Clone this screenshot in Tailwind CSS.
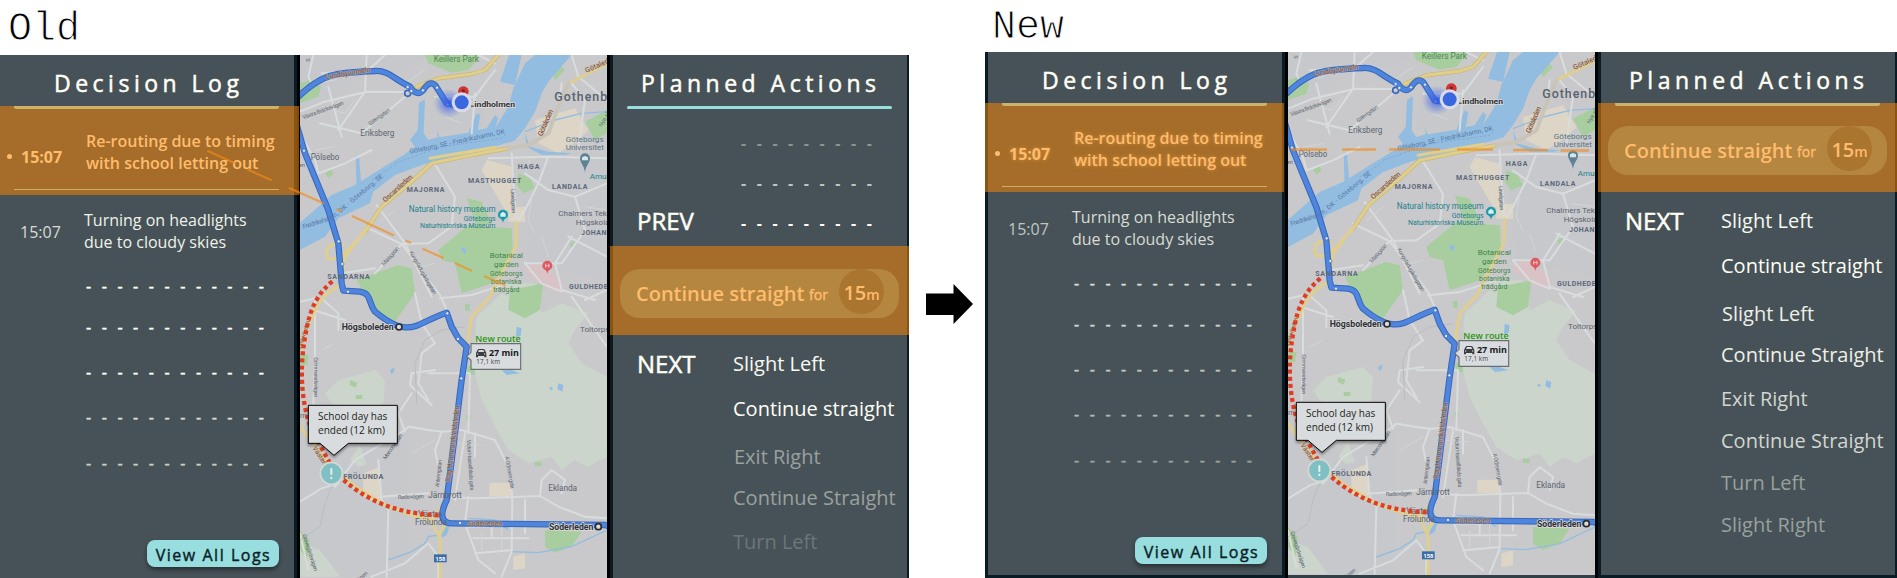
<!DOCTYPE html>
<html lang="en">
<head>
<meta charset="utf-8">
<title>Decision Log – Old and New</title>
<script src="https://cdn.jsdelivr.net/npm/@tailwindcss/browser@4"></script>
</head>
<body class="bg-white font-['Open_Sans',sans-serif]">
<svg class="absolute size-0" aria-hidden="true">
<defs>
<radialGradient id="glow"><stop offset="0" stop-color="#2f55e6" stop-opacity=".85"/><stop offset="1" stop-color="#4a70ee" stop-opacity="0"/></radialGradient>
<filter id="drop" x="-20%" y="-20%" width="140%" height="150%"><feDropShadow dx="0" dy="6" stdDeviation="5" flood-opacity=".4"/></filter>
</defs>
<symbol id="map" viewBox="15 15 921 1569" preserveAspectRatio="none">
<rect x="15" y="15" width="921" height="1569" fill="#c9c9cb"/>
<!-- urban blocks -->
<g fill="#c3c5ca">
<path d="M15 15H400L330 60 200 80 60 190 15 200zM420 100L600 60 560 230 400 250zM660 340L936 310V690L700 640 690 500zM15 1140H340V1580H15z" opacity=".35"/>
</g>
<g fill="#ddd6c6">
<path d="M720 210L840 175 880 240 850 270 790 310 730 280zM575 330L650 350 650 480 630 480 560 360zM640 470h50v45h-50zM205 1270l50-20v110l-50-20zM583 1298h66v40h-66zM655 1520l35-10v45l-35 5z"/>
</g>
<path d="M690 650L740 640 800 690 805 730 740 710 695 670z" fill="#d9c3c6"/>
<!-- open land -->
<g fill="#cbd5cc">
<path d="M740 790L800 760 880 790 840 840 820 880 860 940 936 980V1220L905 1235 880 1250 840 1230 800 1260 770 1220 700 1240 640 1200 600 1130 560 1050 535 950 545 800 620 730z"/>
<path d="M90 1030L130 990 240 960 270 990 265 1060 180 1090 110 1060zM165 1230l30-45 20 60-25 5zM15 1480l60 20 60 80H15zM630 700L720 700 740 790 650 800z"/>
</g>
<!-- parks -->
<g fill="#a8ce9f">
<path d="M390 15H560L520 60 470 68 400 40zM15 100L50 88 78 110 70 140 15 160zM430 600L520 525 650 535 655 620 590 700 500 730 480 640 440 630zM185 690L310 645 350 655 360 730 310 800 290 830 230 770zM645 720L745 700 735 780 690 805 640 780zM515 445L560 455 590 520 545 530zM670 370l35 15 15 30-35 15-20-25zM870 215L936 180V250L900 270zM750 1440L860 1445 830 1490 780 1508 750 1490zM90 370l20-12 5 15-15 10zM190 400l10 3-3 12-8-4zM165 990l22 8-5 15-18-8zM182 1035h20v12h-20zM515 950l25-10v35l-20 0zM15 910l25 5-3 30-22 0zM15 1440l30 30-8 60-22-30zM510 762h14v20h-14zM720 1236h20v12h-20zM515 1096l10-5 3 18-12 3zM770 70l30-20 10 10-30 30zM825 580l15-8-2 15-12 5z"/>
</g>
<!-- water -->
<g fill="#92bde0">
<path d="M15 518L110 435 180 405 260 355 330 312 360 290 345 270 368 240 372 158 390 148 386 250 400 270 428 262 425 240 434 262 520 248 545 190 556 196 548 240 575 235 600 195 610 205 600 235 640 170 655 115 690 40 720 15H830L760 95 740 130 720 185 690 235 660 272 560 300 440 328 380 345 300 375 235 425 225 460 130 505 90 560 15 600z"/>
<path d="M642 15H680L660 105 615 95zM182 318h10L200 420 185 430zM690 250L705 290 760 305 830 310 812 314 740 314 695 290z"/>
<path d="M665 830l15 5-3 22-14 6zM620 960l30 0 25 10-40 5zM790 1000l15 5-3 20-15-8zM765 1010l8 3-2 8-8-4zM285 960l14-8-2 15-8 5zM500 590l14 8-2 15-12-8zM440 1435l25-10-10 30-15 8z"/>
</g>
<g fill="none" stroke="#92bde0" stroke-width="4">
<path d="M690 245L780 210 860 190 936 185M280 1530L350 1505 390 1480 400 1460 430 1455M650 1505L730 1508 830 1490 936 1440M520 1405L600 1410 640 1440"/>
</g>
<!-- minor roads -->
<g fill="none" stroke="#d9dcdc" stroke-width="6" stroke-linecap="round">
<path d="M55 15L40 80 50 100M15 185L90 155 215 125 335 126M215 15L210 125 130 240M75 220L200 250 330 140M100 110L140 260M270 15L220 60 80 70M15 250L60 330 70 370 150 340 230 300M550 15L600 40M420 140L540 140 600 60M540 130L530 250M650 310L655 400 665 520M580 325L760 320 936 325M760 320L730 400 690 480 665 520M690 370L760 420 840 440 936 400M830 100L870 150 850 290M830 15L850 80 936 150M800 100L790 180M840 440L870 540 800 640 735 640 690 640"/>
<path d="M415 335L480 440 470 530 400 580 320 582M245 465L330 580M210 530L320 582 435 735M435 735L460 790 455 785M240 670L320 582M435 745L530 735 640 700M140 670L240 655M830 560L780 640 800 720 900 750M820 560L936 620M690 640L740 700 800 725M936 720L870 750M830 740L900 840 936 890"/>
<path d="M15 755L60 745 60 930 55 1060M85 750L130 790 130 840M55 780L150 810M360 730L380 820 420 880 380 910 370 1000 400 1050M420 960L350 970 345 1005 410 1065M400 970L525 970 520 1150M330 580L410 740M15 1355L80 1315 130 1300M120 1310L180 1230 330 1140 340 1130 400 1140 440 1145 500 1140 600 1170 640 1250 652 1340 650 1500 540 1510"/>
<path d="M455 1340L540 1345 735 1338 790 1370 870 1400 936 1405M520 1340L510 1420 550 1530 600 1570M250 1230L260 1350 280 1380 275 1580M330 1145L310 1090 350 1030M440 1145L420 1200 430 1250M470 1160L490 1060M510 1150L480 1350M540 1150L540 1220M535 1465L700 1465M690 1350V1450M735 1338L740 1290 770 1260 810 1290 800 1330M650 1505L620 1580M255 1340L400 1330M15 1450L40 1560M230 1580L330 1540 400 1480 430 1520 430 1584M520 1430L690 1425M590 1420V1465"/>
</g>
<g fill="none" stroke="#d2d5d6" stroke-width="3">
<path d="M60 100L120 90 160 60M110 180L150 190 180 150M60 300L120 290M390 60L330 100M450 200L500 220M710 440L700 510 720 550M870 470L936 480M700 330L720 360M740 560L760 620M250 520L300 480M380 650L420 640M80 900L120 880M490 1180L560 1185M420 1170L350 1210M560 1450V1500M620 1420V1500"/>
<path d="M510 830L440 840 390 870 360 940 365 1060" stroke="#b9bcc0"/><path d="M15 1470L75 1430 90 1360 110 1310" stroke="#b9bcc0"/>
</g>
<!-- major roads -->
<g fill="none" stroke-linecap="round" stroke-linejoin="round">
<g stroke="#c9b673" stroke-width="13"><path d="M210 545L260 470 350 395 410 340 530 315 640 295M365 110L430 85 530 72 570 60 610 15"/></g>
<g stroke="#e0cf8c" stroke-width="9">
<path d="M365 110L430 85 530 72 570 60 610 15M936 42L870 75 820 100M210 545L260 470 350 395 410 340 530 315 640 295M405 325L600 292M665 515L662 590 625 660 585 740 530 800 518 870 510 930M210 540L150 620 140 700 90 735 65 770 30 850 15 900M145 585Q95 575 95 610T150 610L210 545M15 1130L100 1240 180 1310 280 1370 350 1395 410 1410 436 1470 436 1584M440 1370L410 1410M460 1410L436 1450"/>
</g>
<path d="M640 295L700 285 760 250 790 170 820 100" stroke="#c9c4b8" stroke-width="12"/>
</g>
<path d="M230 390L300 345 M300 340L440 290 620 265 635 250" stroke="#7d9dcb" stroke-width="2" stroke-dasharray="8 5" fill="none"/>
<!-- route -->
<g fill="none" stroke-linecap="round" stroke-linejoin="round">
<g stroke="#3567bd" stroke-width="19">
<path d="M5 145Q70 80 130 72T240 63C280 60 300 90 345 110C360 135 375 132 385 120C400 95 415 95 425 112L455 160 480 165"/>
<path d="M5 225L30 310 100 480 130 580 140 700 145 722 195 725C230 730 220 760 240 785C270 810 300 830 330 832C370 835 390 810 455 788L470 830 490 865 515 890 500 990 455 1350C440 1380 430 1420 470 1420L930 1425 940 1428"/>
</g>
<g stroke="#4f85dc" stroke-width="13">
<path d="M5 145Q70 80 130 72T240 63C280 60 300 90 345 110C360 135 375 132 385 120C400 95 415 95 425 112L455 160 480 165"/>
<path d="M5 225L30 310 100 480 130 580 140 700 145 722 195 725C230 730 220 760 240 785C270 810 300 830 330 832C370 835 390 810 455 788L470 830 490 865 515 890 500 990 455 1350C440 1380 430 1420 470 1420L930 1425 940 1428"/>
</g>
<circle cx="338" cy="130" r="9" stroke="#3567bd" stroke-width="5"/>
</g>
<g fill="#dfe5ee" stroke="#3567bd" stroke-width="2"><circle cx="338" cy="111" r="5"/><circle cx="349" cy="123" r="5"/><circle cx="384" cy="121" r="5"/><circle cx="426" cy="113" r="5"/><circle cx="458" cy="163" r="5"/><circle cx="27" cy="302" r="5"/><circle cx="131" cy="574" r="5"/><circle cx="142" cy="642" r="5"/><circle cx="159" cy="725" r="5"/><circle cx="457" cy="790" r="5"/><circle cx="489" cy="867" r="5"/><circle cx="499" cy="985" r="5"/><circle cx="495" cy="1419" r="5"/></g>
<!-- labels -->
<g font-family="Roboto,sans-serif" font-size="24" fill="#5b6470">
<text x="416" y="35" font-size="25" textLength="136" lengthAdjust="spacingAndGlyphs" fill="#4e8454">Keillers Park</text>
<text x="196" y="259" font-size="25" textLength="102" lengthAdjust="spacingAndGlyphs">Eriksberg</text>
<text x="47" y="329" font-size="25" textLength="86" lengthAdjust="spacingAndGlyphs">Pölsebo</text>
<text x="778" y="153" font-size="37" font-weight="500" letter-spacing="3" fill="#56616f">Gothenburg</text>
<text x="812" y="275" textLength="114" lengthAdjust="spacingAndGlyphs" fill="#5a7484">Göteborgs</text>
<text x="812" y="301" textLength="115" lengthAdjust="spacingAndGlyphs" fill="#5a7484">Universitet</text>
<g font-weight="700" fill="#5c6779" font-size="21">
<text x="668" y="358" textLength="65">HAGA</text><text x="519" y="398" textLength="160">MASTHUGGET</text><text x="771" y="418" textLength="106">LANDALA</text><text x="335" y="426" textLength="113">MAJORNA</text><text x="97" y="688" textLength="127">SANDARNA</text><text x="858" y="555" letter-spacing="1.5">JOHANNEBERG</text><text x="822" y="716" letter-spacing="1.5">GULDHEDEN</text><text x="145" y="1286" font-size="22" textLength="120">FRÖLUNDA</text>
</g>
<g fill="#22808c"><text x="341" y="486" font-size="25" textLength="261" lengthAdjust="spacingAndGlyphs">Natural history museum</text><text x="506" y="512" font-size="21" textLength="96">Göteborgs</text><text x="375" y="535" font-size="21" textLength="226">Naturhistoriska Museum</text><text x="884" y="388">Amundön</text></g>
<text x="790" y="497">Chalmers Tekniska</text><text x="842" y="524">Högskola</text>
<g fill="#3f8448" text-anchor="middle"><text x="634" y="625" textLength="100">Botanical</text><text x="634" y="652">garden</text><text x="634" y="678" font-size="21">Göteborgs</text><text x="634" y="702" font-size="21">botaniska</text><text x="634" y="725" font-size="21">trädgård</text></g>
<text x="855" y="845">Toltorpsdalen</text><text x="-12" y="724">en</text>
<text x="760" y="1324" font-size="25" textLength="86">Eklanda</text><text x="400" y="1344" font-size="25" textLength="100">Järnbrott</text><text x="370" y="1401" font-size="25">Västra</text><text x="360" y="1426" font-size="25" textLength="96">Frölunda</text>
<g fill="#5877a8" font-size="20">
<text transform="translate(345 311) rotate(-12)" textLength="292">Göteborg, SE - Fredrikshamn, DK</text>
<text transform="translate(25 537) rotate(-18)" textLength="98">Fredriksham</text><text transform="translate(120 503) rotate(-40)" textLength="190">n, DK - Göteborg, SE</text>
</g>
<g fill="#8b5a3e" font-weight="500" font-size="22" stroke="#d3cfc8" stroke-width="2.5" stroke-opacity=".6" paint-order="stroke">
<text transform="translate(94 87) rotate(-9)" textLength="135">Lundbytunneln</text><text transform="translate(271 458) rotate(-42)" textLength="112">Oscarsleden</text><text transform="translate(741 260) rotate(-66)" textLength="85">Götaleden</text><text transform="translate(874 69) rotate(-24)">Götaleden</text><text transform="translate(466 1297) rotate(-83)" textLength="232">Dag Hammarskjöldsleden</text><text x="517" y="1427" textLength="105">Söderleden</text><text transform="translate(52 1195) rotate(56)" font-size="20">Västerleden</text>
<text transform="translate(17 900) rotate(-72)" font-size="17">Västerleden</text>
</g>
<g font-size="17" fill="#616872">
<text transform="translate(25 208) rotate(-20)" textLength="130">Västra Bräckevägen</text><text transform="translate(226 227) rotate(-36)" textLength="75">Säterigatan</text><text transform="translate(342 607) rotate(60)" textLength="147">Kungsladugårdsgatan</text><text transform="translate(267 648) rotate(-48)" textLength="70">Mariagatan</text><text transform="translate(647 418) rotate(87)" textLength="72">Linnégatan</text><text transform="translate(56 922) rotate(90)" textLength="120">Grimmeredsvägen</text><text transform="translate(272 1230) rotate(-55)" textLength="90">Marconigatan</text><text transform="translate(432 1312) rotate(-84)" textLength="82">Antenngatan</text><text transform="translate(515 1170) rotate(86)" textLength="152">Victor Hasselblads gata</text><text transform="translate(630 1220) rotate(80)" textLength="98">A Odhners gata</text><text transform="translate(309 1347) rotate(-2)" textLength="78">Radiovägen</text><text transform="translate(22 1455) rotate(72)" textLength="115">Grevegårdsvägen</text><text transform="translate(185 1600) rotate(-40)">vägen</text><text transform="translate(920 232) rotate(-60)">Nya allén</text><text x="2" y="351">gen</text><text transform="translate(46 35) rotate(-90)">S</text><text x="15" y="1104" font-size="24">m</text>
</g>
</g>
<!-- points of interest -->
<path d="M870 397C867 375 855 368 855 355a15 15 0 0 1 30 0C885 368 873 375 870 397z" fill="#5d8295" transform="translate(0 -30)"/><path d="M861 322l9-4 9 4v9h-18z" fill="#d9e4e6"/>
<path d="M624 519C621 500 609 508 609 494a15 15 0 0 1 30 0C639 508 627 500 624 519z" fill="#1d99aa"/><path d="M616 491l8-6 8 6v9h-16z" fill="#d9f0f0"/>
<path d="M757 671C754 655 742 660 742 647a15 15 0 0 1 30 0C772 660 760 655 757 671z" fill="#db5a62"/><path d="M752 641v12M762 641v12M752 647h10" stroke="#f6dada" stroke-width="2.5"/>
<rect x="417" y="1513" width="38" height="24" fill="#3d6da8"/><text x="436" y="1532" text-anchor="middle" font-family="Roboto" font-weight="700" font-size="17" fill="#fff">158</text>
<!-- blocked route -->
<g fill="none" stroke="#e03c22" stroke-width="13" stroke-dasharray="12 9.3">
<path d="M112 694C50 745 38 810 27 880C15 960 18 1060 50 1140L105 1240"/>
<path d="M146 1290C210 1345 290 1390 432 1396"/>
</g>
<g font-family="Roboto,sans-serif" font-weight="700" font-size="25" fill="#2d3036" stroke="#dcdcdc" stroke-width="4" paint-order="stroke">
<text x="140" y="839" font-size="26" textLength="156" lengthAdjust="spacingAndGlyphs">Högsboleden</text>
<text x="762" y="1439" font-size="26" textLength="133" lengthAdjust="spacingAndGlyphs">Söderleden</text>
<text x="538" y="170" font-size="24" textLength="122" lengthAdjust="spacingAndGlyphs">indholmen</text><rect x="528" y="167" width="8" height="3" stroke="none"/>
</g>
<g fill="#dcdcdc" stroke="#2c2c2e" stroke-width="5"><circle cx="312" cy="831" r="9"/><circle cx="910" cy="1430" r="9"/></g>
<!-- vehicle -->
<path d="M490 130a16 16 0 1 1 30 0l-15 20z" fill="#d13434"/><circle cx="505" cy="123" r="5" fill="#8a1a22"/>
<ellipse cx="462" cy="160" rx="46" ry="44" fill="url(#glow)"/>
<circle cx="500" cy="157" r="30" fill="#d9dce6"/><circle cx="500" cy="157" r="21" fill="#3a66e0"/>
<!-- callouts -->
<text x="541" y="875" font-family="Open Sans,sans-serif" font-weight="600" font-size="25" fill="#2c9313" textLength="136" lengthAdjust="spacingAndGlyphs">New route</text>
<path d="M528 881H677V958H528V931L515 919 528 907z" fill="#d8dcde" stroke="#6b6f72" stroke-width="3.5"/>
<path d="M543 909L548 899Q549 897 552 897H565Q568 897 569 899L574 909V922H568V918H549V922H543z" fill="#3b3d40"/><path d="M549 906L552 900H565L568 906z" fill="#d8dcde"/><circle cx="548" cy="912" r="2" fill="#d8dcde"/><circle cx="569" cy="912" r="2" fill="#d8dcde"/>
<text x="582" y="918" font-family="Open Sans,sans-serif" font-weight="700" font-size="26" fill="#17191b" textLength="90" lengthAdjust="spacingAndGlyphs">27 min</text>
<text x="544" y="941" font-family="Open Sans,sans-serif" font-size="19" fill="#404346" textLength="71">17,1 km</text>
<g filter="url(#drop)"><path d="M40 1066H307V1180H160L117 1216 75 1180H40z" fill="#d8dcde" stroke="#050505" stroke-width="3"/></g>
<g font-family="Open Sans,sans-serif" font-size="30" fill="#1c1e20"><text x="69" y="1109" textLength="208" lengthAdjust="spacingAndGlyphs">School day has</text><text x="69" y="1151" textLength="201" lengthAdjust="spacingAndGlyphs">ended (12 km)</text></g>
<circle cx="109" cy="1270" r="33" fill="#80c0c4" stroke="#d3d9d2" stroke-width="5"/><rect x="106" y="1254" width="6" height="21" rx="3" fill="#e4efec"/><circle cx="109" cy="1284" r="3.5" fill="#e4efec"/>
</symbol>
</svg>

<main class="flex h-[578px] w-[1897px] overflow-hidden">
<!-- Old -->
<section class="flex w-[909px] shrink-0 flex-col">
<h1 class="h-[55px] shrink-0 pl-[8px] pt-[7px] font-['Liberation_Mono',monospace] text-[40px] leading-[46px] text-black [-webkit-text-stroke:1px_white]">Old</h1>
<div class="relative flex h-[523px] bg-black text-[#fffff5]">
<div class="mr-[3px] flex w-[297px] shrink-0 flex-col border-r-[3px] border-[#091c26] bg-[#465258]">
<h2 class="h-[51px] shrink-0 whitespace-nowrap pl-[54px] pt-[12px] text-[23px] leading-8 tracking-[4.5px] [-webkit-text-stroke:0.5px]">Decision Log</h2>
<div class="relative z-10 flex h-[89px] w-[299px] shrink-0 flex-col bg-[#f08206]/56 text-base font-semibold text-[#ffbc6d]">
<div class="ml-[14px] h-[3px] w-[265px] rounded-b-xs bg-[#cdb269]"></div>
<div class="flex h-[80px] pt-[21px]"><span class="ml-[7px] mr-[9px] mt-[24px] size-[5px] rounded-full bg-[#ffbc6d]"></span><span class="w-[65px] pt-[16px] font-bold leading-[22px]">15:07</span><p class="whitespace-nowrap leading-[22px]">Re-routing due to timing<br>with school letting out</p></div>
<div class="ml-[14px] h-px w-[265px] bg-[#cdb060]"></div>
</div>
<div class="mt-[14px] flex h-[65px] shrink-0 leading-[22px]"><span class="ml-[20px] w-[64px] pt-[12px] text-[#d8dcd4]">15:07</span><p class="whitespace-nowrap text-[#f0f2e8]">Turning on headlights<br>due to cloudy skies</p></div>
<div class="flex flex-col whitespace-nowrap pl-[86px] leading-6 tracking-[0.2em] [-webkit-text-stroke:0.4px]"><p class="h-[41px]">- - - - - - - - - - - -</p><p class="h-[45px]">- - - - - - - - - - - -</p><p class="h-[45px]">- - - - - - - - - - - -</p><p class="h-[46px] text-[#dadcd4]">- - - - - - - - - - - -</p><p class="text-[#c8ccc5]">- - - - - - - - - - - -</p></div>
<div class="mb-[11px] ml-[147px] mt-auto flex h-[27px] w-[132px] items-center justify-center whitespace-nowrap rounded-lg bg-[#99dedf] pl-px pt-[2px] text-base tracking-[0.095em] text-[#0a1c26] shadow-[0_3px_4px_rgba(0,0,0,.4)] [-webkit-text-stroke:0.4px]">View All Logs</div>
</div>
<svg class="h-[523px] w-[307px] shrink-0"><use href="#map" width="307" height="523"/></svg>
<div class="ml-[3px] flex w-[299px] shrink-0 flex-col border-l-[3px] border-r-2 border-[#091c26] bg-[#465258]">
<h2 class="h-[51px] shrink-0 whitespace-nowrap pl-[28px] pt-[12px] text-[23px] leading-8 tracking-[4.5px] [-webkit-text-stroke:0.5px]">Planned Actions</h2>
<div class="ml-[14px] h-[3px] w-[265px] shrink-0 rounded-full bg-[#99dedf]"></div>
<div class="flex h-[137px] shrink-0 pt-[22px]"><span class="w-[102px] pl-[24px] pt-[78px] text-[24px] leading-6 [-webkit-text-stroke:0.5px]">PREV</span><div class="ml-[26px] whitespace-nowrap font-bold leading-6 tracking-[0.2em]"><p class="h-10 text-[#8b9492]">- - - - - - - - -</p><p class="h-10 text-[#c0c4bf]">- - - - - - - - -</p><p>- - - - - - - - -</p></div></div>
<div class="-ml-[3px] flex h-[89px] w-[299px] shrink-0 bg-[#f08206]/56 pl-[10px] pt-[23px]">
<div class="flex h-[49px] w-[279px] items-center whitespace-nowrap rounded-[20px] bg-[#b58640] pl-[16px] text-[#ffbc6d]"><span class="w-[173px] text-[20px] font-semibold">Continue straight</span><span class="w-[30px] pt-[3px] text-sm [-webkit-text-stroke:0.4px]">for</span><span class="-mt-1 flex size-[45px] items-baseline justify-center rounded-full bg-[#aa752f] text-[20px] font-semibold leading-[47px]">15<span class="text-sm">m</span></span></div>
</div>
<div class="flex pt-[17px]"><span class="w-[120px] pl-[24px] text-[24px] leading-6 [-webkit-text-stroke:0.5px]">NEXT</span><div class="whitespace-nowrap text-[20px] leading-6"><p class="h-[45px] text-[#f8f9f0]">Slight Left</p><p class="h-[48px]">Continue straight</p><p class="h-[41px] pl-px text-[#9aa19f]">Exit Right</p><p class="h-[44px] text-[#9aa19f]">Continue Straight</p><p class="text-[#6c7678]">Turn Left</p></div></div>
</div>
<svg class="absolute left-0 top-0 z-20" width="600" height="523" viewBox="0 55 600 523"><path d="M207.3 150.7L235.5 163.5M247.5 169.5L271.5 180.2M288.7 187.7L324 203.5M336.5 209L341.5 212M352 216L394 235.5M405.5 240.5L411 243M422.5 248.7L443.5 258M455 263L472 271M484 276L505.5 285.5" stroke="#f58a18" stroke-opacity=".65" stroke-width="2.2"/></svg>
</div>
</section>

<!-- transition arrow -->
<div class="flex w-[76px] shrink-0 pl-[17px] pt-[284px]"><svg width="47" height="40" viewBox="0 0 47 40"><path d="M0 9.5H27.5V0L47 20 27.5 40V31H0z"/></svg></div>

<!-- New -->
<section class="flex w-[912px] shrink-0 flex-col">
<h1 class="h-[52px] shrink-0 pl-[7px] pt-[5px] font-['Liberation_Mono',monospace] text-[40px] leading-[46px] text-black [-webkit-text-stroke:1px_white]">New</h1>
<div class="relative flex h-[526px] bg-black text-[#fffff5]">
<div class="mr-[3px] flex w-[300px] shrink-0 flex-col border-x-[3px] border-b-[3px] border-[#091c26] bg-[#465258]">
<h2 class="h-[51px] shrink-0 whitespace-nowrap pl-[54px] pt-[12px] text-[23px] leading-8 tracking-[4.5px] [-webkit-text-stroke:0.5px]">Decision Log</h2>
<div class="relative z-10 -ml-[3px] flex h-[89px] w-[299px] shrink-0 flex-col bg-[#f08206]/56 pl-[3px] text-base font-semibold text-[#ffbc6d] [text-shadow:0_0_4px_#ffae5099]">
<div class="ml-[14px] h-[3px] w-[265px] rounded-b-xs bg-[#cdb269]"></div>
<div class="flex h-[80px] pt-[21px]"><span class="ml-[7px] mr-[9px] mt-[24px] size-[5px] rounded-full bg-[#ffbc6d]"></span><span class="w-[65px] pt-[16px] font-bold leading-[22px]">15:07</span><p class="whitespace-nowrap leading-[22px]">Re-routing due to timing<br>with school letting out</p></div>
<div class="ml-[14px] h-px w-[265px] bg-[#cdb060]"></div>
</div>
<div class="mt-[14px] flex h-[65px] shrink-0 leading-[22px]"><span class="ml-[20px] w-[64px] pt-[12px] text-[#c0c6c0]">15:07</span><p class="whitespace-nowrap text-[#d8dcd4]">Turning on headlights<br>due to cloudy skies</p></div>
<div class="flex flex-col whitespace-nowrap pl-[86px] leading-6 tracking-[0.2em] [-webkit-text-stroke:0.4px]"><p class="h-[41px] text-[#d8dcd4]">- - - - - - - - - - - -</p><p class="h-[45px] text-[#d0d4cc]">- - - - - - - - - - - -</p><p class="h-[45px] text-[#c0c5be]">- - - - - - - - - - - -</p><p class="h-[46px] text-[#b0b6b1]">- - - - - - - - - - - -</p><p class="text-[#9aa19f]">- - - - - - - - - - - -</p></div>
<div class="mb-[11px] ml-[147px] mt-auto flex h-[27px] w-[132px] items-center justify-center whitespace-nowrap rounded-lg bg-[#99dedf] pl-px pt-[2px] text-base tracking-[0.095em] text-[#0a1c26] shadow-[0_3px_4px_rgba(0,0,0,.4)] [-webkit-text-stroke:0.4px]">View All Logs</div>
</div>
<div class="w-[307px] shrink-0 bg-[#333f46]"><svg class="block h-[523px] w-[307px]"><use href="#map" width="307" height="523"/></svg></div>
<div class="ml-[3px] flex w-[299px] shrink-0 flex-col border-b-[3px] border-l-[3px] border-r-2 border-[#091c26] bg-[#465258]">
<h2 class="h-[51px] shrink-0 whitespace-nowrap pl-[28px] pt-[12px] text-[23px] leading-8 tracking-[4.5px] [-webkit-text-stroke:0.5px]">Planned Actions</h2>
<div class="-ml-[3px] flex h-[89px] w-[299px] shrink-0 flex-col bg-[#f08206]/56 pl-[10px]">
<div class="mb-[20px] ml-[7px] h-[3px] w-[265px] rounded-b-xs bg-[#cdb269]"></div>
<div class="flex h-[49px] w-[279px] items-center whitespace-nowrap rounded-[20px] bg-[#b58640] pl-[16px] text-[#ffbc6d]"><span class="w-[173px] text-[20px] font-semibold">Continue straight</span><span class="w-[30px] pt-[3px] text-sm [-webkit-text-stroke:0.4px]">for</span><span class="-mt-1 flex size-[45px] items-baseline justify-center rounded-full bg-[#aa752f] text-[20px] font-semibold leading-[47px]">15<span class="text-sm">m</span></span></div>
</div>
<div class="flex pt-[17px]"><span class="w-[120px] pl-[24px] text-[24px] leading-6 [-webkit-text-stroke:0.5px]">NEXT</span><div class="whitespace-nowrap text-[20px] leading-6"><p class="h-[45px] text-[#f8f9f0]">Slight Left</p><p class="h-[48px]">Continue straight</p><p class="h-[41px] pl-px text-[#eef0e7]">Slight Left</p><p class="h-[44px] text-[#eef0e7]">Continue Straight</p><p class="h-[42px] text-[#d2d6cf]">Exit Right</p><p class="h-[42px] text-[#d2d6cf]">Continue Straight</p><p class="h-[42px] text-[#98a09e]">Turn Left</p><p class="text-[#98a09e]">Slight Right</p></div></div>
</div>
<svg class="absolute left-0 top-0 z-20" width="620" height="523" viewBox="985 52 620 523"><path d="M1291 149.5H1327M1342 149.5H1376M1389 149.5H1440M1457 149.5H1493M1513 150H1548M1560.5 150.5H1589" stroke="#f58a18" stroke-opacity=".65" stroke-width="2.3"/></svg>
</div>
</section>
</main>
</body>
</html>
